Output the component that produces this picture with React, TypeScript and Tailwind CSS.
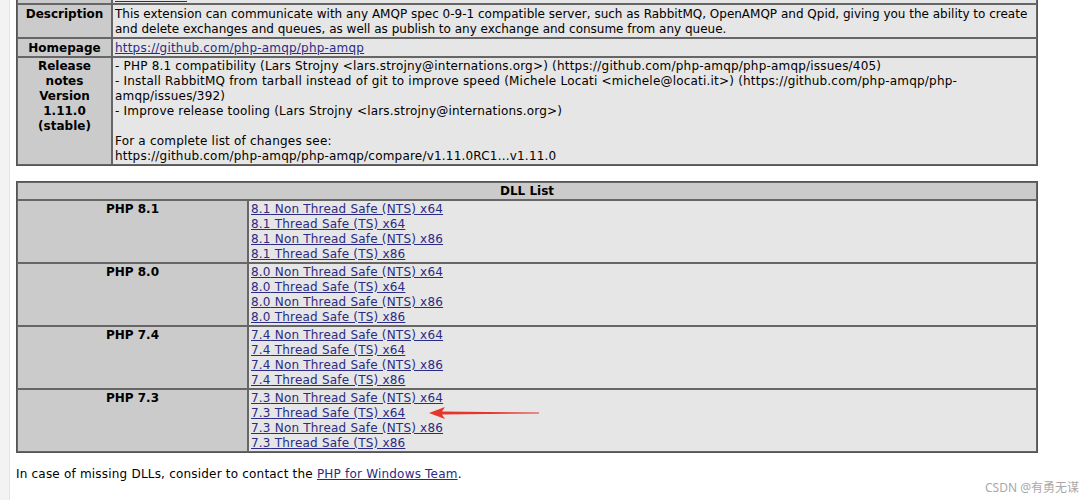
import React from "react";

const font = { fontFamily: '"DejaVu Sans", Verdana, sans-serif' };

const linkCls = "text-[#2b2b85] underline";
const reg = "font-normal tracking-[0.2px]";

function Label({ children, pt = "pt-[1px]" }: { children: React.ReactNode; pt?: string }) {
  return (
    <td className={`bg-[#cbcbcb] border border-[#666] align-top text-center font-bold px-[2px] pb-0 ${pt}`}>
      {children}
    </td>
  );
}

function Val({ children, extra = "" }: { children: React.ReactNode; extra?: string }) {
  return (
    <td className={`bg-[#e6e6e6] border border-[#666] align-top px-[2px] pb-0 ${extra}`}>
      {children}
    </td>
  );
}

const dll: [string, string][] = [
  ["8.1", "PHP 8.1"],
  ["8.0", "PHP 8.0"],
  ["7.4", "PHP 7.4"],
  ["7.3", "PHP 7.3"],
];

export default function App() {
  return (
    <div
      className="relative w-[1087px] h-[500px] overflow-hidden bg-white text-black text-[12px] leading-[15px]"
      style={font}
    >
      <div className="flex h-full">
        <div className="w-[10px] h-full bg-[#f3f3f3] border-r border-[#e4e4e4]" />
        <div className="pl-[6px] flex flex-col">
          <table className="w-[1022px] border-separate border-spacing-0 border border-[#555] border-t-0">
            <colgroup>
              <col className="w-[95px]" />
              <col />
            </colgroup>
            <tbody>
              <tr>
                <td className="bg-[#cbcbcb] border border-[#666] border-t-0 h-[4px] p-0" />
                <td className="bg-[#e6e6e6] border border-[#666] border-t-0 h-[4px] p-0">
                  <div className="ml-[2px] w-[72px] h-[2px] border-t border-[#2b2b85]" />
                </td>
              </tr>
              <tr>
                <Label pt="pt-[2px]">Description</Label>
                <Val extra="pt-[2px] tracking-normal">
                  This extension can communicate with any AMQP spec 0-9-1 compatible server, such as RabbitMQ,
                  OpenAMQP and Qpid, giving you the ability to create and delete exchanges and queues, as well as
                  publish to any exchange and consume from any queue.
                </Val>
              </tr>
              <tr>
                <Label pt="pt-[2px]">Homepage</Label>
                <Val extra={`pt-[2px] ${reg}`}>
                  <a className={linkCls}>https://github.com/php-amqp/php-amqp</a>
                </Val>
              </tr>
              <tr>
                <Label>
                  Release
                  <br />
                  notes
                  <br />
                  Version
                  <br />
                  1.11.0
                  <br />
                  (stable)
                </Label>
                <Val extra={`pt-[1px] ${reg}`}>
                  - PHP 8.1 compatibility (Lars Strojny &lt;lars.strojny@internations.org&gt;)
                  (https://github.com/php-amqp/php-amqp/issues/405)
                  <br />- Install RabbitMQ from tarball instead of git to improve speed (Michele Locati
                  &lt;michele@locati.it&gt;) (https://github.com/php-amqp/php-
                  <br />
                  amqp/issues/392)
                  <br />- Improve release tooling (Lars Strojny &lt;lars.strojny@internations.org&gt;)
                  <br />
                  <br />
                  For a complete list of changes see:
                  <br />
                  https://github.com/php-amqp/php-amqp/compare/v1.11.0RC1...v1.11.0
                </Val>
              </tr>
            </tbody>
          </table>

          <table className="mt-[15px] w-[1022px] border-separate border-spacing-0 border border-[#555]">
            <colgroup>
              <col className="w-[231px]" />
              <col />
            </colgroup>
            <tbody>
              <tr>
                <td colSpan={2} className="bg-[#cbcbcb] border border-[#666] text-center font-bold px-[2px] pt-[1px] pb-0">
                  DLL List
                </td>
              </tr>
              {dll.map(([v, label]) => (
                <tr key={v}>
                  <td className="bg-[#cbcbcb] border border-[#666] align-top text-center font-bold px-[2px] pt-[1px] pb-0">
                    {label}
                  </td>
                  <td className={`bg-[#e6e6e6] border border-[#666] align-top px-[2px] pt-[1px] pb-0 ${reg}`}>
                    <div className="flex flex-col items-start">
                      <a className={linkCls}>{v} Non Thread Safe (NTS) x64</a>
                      <a className={linkCls}>{v} Thread Safe (TS) x64</a>
                      <a className={linkCls}>{v} Non Thread Safe (NTS) x86</a>
                      <a className={linkCls}>{v} Thread Safe (TS) x86</a>
                    </div>
                  </td>
                </tr>
              ))}
            </tbody>
          </table>

          <p className={`mt-[14px] ${reg}`}>
            In case of missing DLLs, consider to contact the <a className={linkCls}>PHP for Windows Team</a>.
          </p>
        </div>
      </div>

      <svg className="absolute left-[425px] top-[405px]" width="120" height="16" viewBox="0 0 120 16">
        <path d="M4 8 L20 2 L17 6.5 L114 7.6 L114 8.4 L17 9.5 L20 14 Z" fill="#e8352b" />
      </svg>

      <div
        className="absolute left-[985px] top-[480px] text-[12px] text-[#a9a9a9]"
        style={{ fontFamily: '"Noto Sans", "Noto Sans CJK SC", sans-serif' }}
      >
        CSDN @有勇无谋
      </div>
    </div>
  );
}
